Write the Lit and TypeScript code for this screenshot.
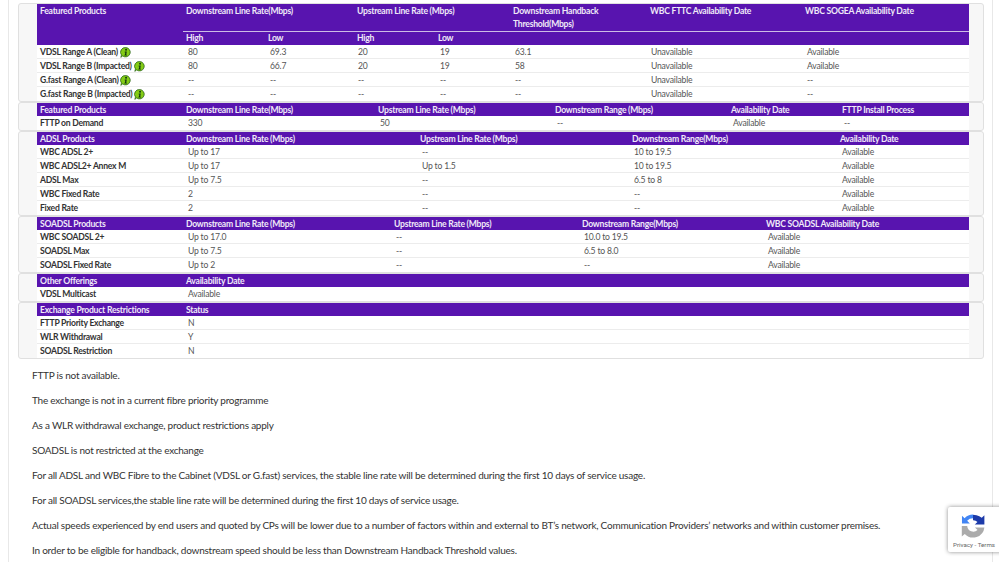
import { LitElement, html, css, svg } from "lit";
import { customElement } from "lit/decorators.js";

interface Section { cols: number[]; head: string[]; rows: string[][]; info?: boolean; }

const sections: Section[] = [
  {
    cols: [146, 82, 88, 82, 75, 136, 156, 0],
    head: [],
    info: true,
    rows: [
      ["VDSL Range A (Clean)", "80", "69.3", "20", "19", "63.1", "Unavailable", "Available"],
      ["VDSL Range B (Impacted)", "80", "66.7", "20", "19", "58", "Unavailable", "Available"],
      ["G.fast Range A (Clean)", "--", "--", "--", "--", "--", "Unavailable", "--"],
      ["G.fast Range B (Impacted)", "--", "--", "--", "--", "--", "Unavailable", "--"],
    ],
  },
  {
    cols: [146, 192, 177, 176, 111, 0],
    head: ["Featured Products", "Downstream Line Rate(Mbps)", "Upstream Line Rate (Mbps)", "Downstream Range (Mbps)", "Availability Date", "FTTP Install Process"],
    rows: [["FTTP on Demand", "330", "50", "--", "Available", "--"]],
  },
  {
    cols: [146, 234, 212, 208, 0],
    head: ["ADSL Products", "Downstream Line Rate (Mbps)", "Upstream Line Rate (Mbps)", "Downstream Range(Mbps)", "Availability Date"],
    rows: [
      ["WBC ADSL 2+", "Up to 17", "--", "10 to 19.5", "Available"],
      ["WBC ADSL2+ Annex M", "Up to 17", "Up to 1.5", "10 to 19.5", "Available"],
      ["ADSL Max", "Up to 7.5", "--", "6.5 to 8", "Available"],
      ["WBC Fixed Rate", "2", "--", "--", "Available"],
      ["Fixed Rate", "2", "--", "--", "Available"],
    ],
  },
  {
    cols: [146, 208, 188, 184, 0],
    head: ["SOADSL Products", "Downstream Line Rate (Mbps)", "Upstream Line Rate (Mbps)", "Downstream Range(Mbps)", "WBC SOADSL Availability Date"],
    rows: [
      ["WBC SOADSL 2+", "Up to 17.0", "--", "10.0 to 19.5", "Available"],
      ["SOADSL Max", "Up to 7.5", "--", "6.5 to 8.0", "Available"],
      ["SOADSL Fixed Rate", "Up to 2", "--", "--", "Available"],
    ],
  },
  {
    cols: [146, 0],
    head: ["Other Offerings", "Availability Date"],
    rows: [["VDSL Multicast", "Available"]],
  },
  {
    cols: [146, 0],
    head: ["Exchange Product Restrictions", "Status"],
    rows: [
      ["FTTP Priority Exchange", "N"],
      ["WLR Withdrawal", "Y"],
      ["SOADSL Restriction", "N"],
    ],
  },
];

const notes = [
  "FTTP is not available.",
  "The exchange is not in a current fibre priority programme",
  "As a WLR withdrawal exchange, product restrictions apply",
  "SOADSL is not restricted at the exchange",
  "For all ADSL and WBC Fibre to the Cabinet (VDSL or G.fast) services, the stable line rate will be determined during the first 10 days of service usage.",
  "For all SOADSL services,the stable line rate will be determined during the first 10 days of service usage.",
  "Actual speeds experienced by end users and quoted by CPs will be lower due to a number of factors within and external to BT\u2019s network, Communication Providers\u2019 networks and within customer premises.",
  "In order to be eligible for handback, downstream speed should be less than Downstream Handback Threshold values.",
];

const gridOf = (cols: number[]) =>
  `grid-template-columns:${cols.map((c) => (c ? c + "px" : "1fr")).join(" ")}`;

const infoIcon = svg`<svg class="info" viewBox="0 0 12 12" width="11" height="11" aria-hidden="true">
  <path d="M6.3 .6a5.1 5.1 0 1 1-3.4 9.1L.9 11.3l.7-2.6A5.1 5.1 0 0 1 6.3 .6z" fill="#84cc16" stroke="#1f5a14" stroke-width=".8"/>
  <circle cx="6.6" cy="3" r="1.05" fill="#0f3310"/>
  <path d="M5.2 4.9h2.2l-.6 3.5h.8v1H4.7v-1h.7l.4-2.5h-.7z" fill="#0f3310"/>
</svg>`;

@customElement("app-root")
export class AppRoot extends LitElement {
  static styles = css`
    :host {
      display: block;
      position: relative;
      height: 562px;
      overflow: hidden;
      background: #fff;
      font-family: "Lato", sans-serif;
    }
    .page {
      margin: 0 6px 0 8px;
      height: 562px;
      box-sizing: border-box;
      border-left: 1px solid #e8e8e8;
      border-right: 1px solid #e8e8e8;
      padding: 3px 8px 0 9px;
    }
    .box {
      background: #f7f7f7;
      border: 1px solid #e0e0e0;
      border-radius: 3px;
      padding: 0 14px 0 18px;
    }
    .row {
      display: grid;
      height: 14px;
      box-sizing: border-box;
      padding-top: 1px;
      background: #fff;
      border-bottom: 1px solid #ececec;
      color: #555;
      font-size: 8.6px;
      letter-spacing: -0.2px;
      line-height: 13px;
    }
    .row:last-child { border-bottom: 0; }
    .row > div { padding-left: 5px; white-space: nowrap; }
    .row > div:first-child { padding-left: 3px; font-weight: 700; color: #333; letter-spacing: -0.25px; }
    .head, .tallhead, .subhead {
      display: grid;
      background: #5814af;
      color: #f0eaf8;
      font-size: 8.6px;
      letter-spacing: -0.24px;
      font-weight: 700;
    }
    .head > div, .tallhead > div, .subhead > div { padding-left: 3px; white-space: nowrap; }
    .head { height: 13px; line-height: 14px; }
    .tallhead { height: 27px; line-height: 13.5px; padding-top: 0.5px; box-sizing: border-box; }
    .subhead { height: 13px; line-height: 12px; }
    .rule { display: flex; height: 1px; background: #5814af; }
    .rule i { width: 146px; }
    .rule b { flex: 1; background: #cdbce6; }
    .info { display: inline-block; vertical-align: -2.5px; margin-left: 0; }
    .notes { margin: 4px 0 0 14px; }
    .notes p {
      margin: 0;
      color: #333;
      font-size: 10px;
      letter-spacing: -0.23px;
      line-height: 25px;
      white-space: nowrap;
    }
    .badge {
      position: absolute;
      left: 948px;
      top: 507px;
      width: 60px;
      height: 45px;
      background: #fff;
      border-radius: 2px;
      box-shadow: 0 0 4px rgba(0, 0, 0, 0.45);
      font-family: "Roboto", sans-serif;
      font-size: 6.2px;
      color: #666;
    }
    .badge svg { position: absolute; left: 11px; top: 5px; }
    .badge span { position: absolute; left: 5px; top: 33.5px; line-height: 9px; white-space: nowrap; }
  `;

  private renderRows(s: Section) {
    return s.rows.map(
      (r) => html`<div class="row" style=${gridOf(s.cols)}>
        ${r.map((t, i) => html`<div>${t}${s.info && i === 0 ? html` ${infoIcon}` : ""}</div>`)}
      </div>`
    );
  }

  private renderFirst(s: Section) {
    return html`<section class="box">
      <div class="tallhead" style=${gridOf([146, 171, 156, 137, 155, 0])}>
        <div>Featured Products</div>
        <div>Downstream Line Rate(Mbps)</div>
        <div>Upstream Line Rate (Mbps)</div>
        <div>Downstream Handback<br />Threshold(Mbps)</div>
        <div>WBC FTTC Availability Date</div>
        <div>WBC SOGEA Availability Date</div>
      </div>
      <div class="rule"><i></i><b></b></div>
      <div class="subhead" style=${gridOf([146, 82, 89, 81, 0])}>
        <div></div><div>High</div><div>Low</div><div>High</div><div>Low</div>
      </div>
      ${this.renderRows(s)}
    </section>`;
  }

  render() {
    return html`
      <div class="page">
        ${this.renderFirst(sections[0])}
        ${sections.slice(1).map(
          (s) => html`<section class="box">
            <div class="head" style=${gridOf(s.cols)}>${s.head.map((h) => html`<div>${h}</div>`)}</div>
            ${this.renderRows(s)}
          </section>`
        )}
        <div class="notes">${notes.map((n) => html`<p>${n}</p>`)}</div>
      </div>
      <div class="badge">
        <svg viewBox="0 0 32 32" width="28" height="28" aria-hidden="true">
          <path d="M16 3a13 13 0 0 0-9.6 4.2L3.4 4.4V13h9L9.3 10A9 9 0 0 1 16 7.2V3z" fill="#4285f4"/>
          <path d="M16 3v6.4h.4a7 7 0 0 1 4.7 2L18 14.4h11V3.6l-3 3A13 13 0 0 0 20 3.6z" fill="#1c3aa9"/>
          <path d="M3 16h6.4a7 7 0 0 0 11.8 4.6l-3-3H29A13 13 0 0 1 6.6 25L3.2 28V16z" fill="#ababab"/>
        </svg>
        <span>Privacy - Terms</span>
      </div>
    `;
  }
}
